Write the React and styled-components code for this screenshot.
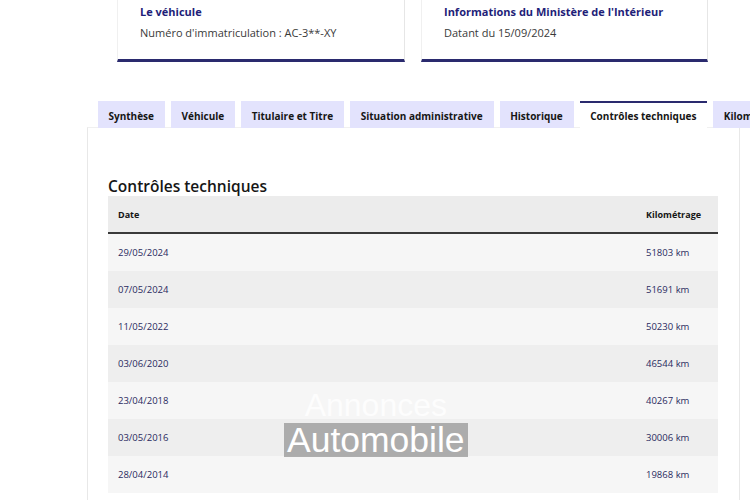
import styled, { createGlobalStyle } from "styled-components"

const GlobalStyle = createGlobalStyle`
    body {
        margin: 0;
        background: #ffffff;
        font-family: "Open Sans", "Liberation Sans", sans-serif;
        color: #161616;
    }
`;

const tabs = [
    "Synthèse",
    "Véhicule",
    "Titulaire et Titre",
    "Situation administrative",
    "Historique",
    "Contrôles techniques",
    "Kilométrage",
];

const controles = [
    { date: "29/05/2024", km: "51803 km" },
    { date: "07/05/2024", km: "51691 km" },
    { date: "11/05/2022", km: "50230 km" },
    { date: "03/06/2020", km: "46544 km" },
    { date: "23/04/2018", km: "40267 km" },
    { date: "03/05/2016", km: "30006 km" },
    { date: "28/04/2014", km: "19868 km" },
];

const App = () => {
    return (
        <StyledPage>
            <GlobalStyle />
            <StyledCards>
                <StyledCard>
                    <StyledCardTitle>Le véhicule</StyledCardTitle>
                    <StyledCardText>Numéro d'immatriculation : AC-3**-XY</StyledCardText>
                </StyledCard>
                <StyledCard>
                    <StyledCardTitle>Informations du Ministère de l'Intérieur</StyledCardTitle>
                    <StyledCardText>Datant du 15/09/2024</StyledCardText>
                </StyledCard>
            </StyledCards>

            <StyledTabsWrap>
                <StyledTabList>
                    {tabs.map((t) => (
                        <StyledTab key={t} $active={t === "Contrôles techniques"}>{t}</StyledTab>
                    ))}
                </StyledTabList>
                <StyledPanel>
                    <StyledHeading>Contrôles techniques</StyledHeading>
                    <StyledTable>
                        <StyledHeadRow>
                            <div>Date</div>
                            <div />
                            <div>Kilométrage</div>
                        </StyledHeadRow>
                        {controles.map((c, i) => (
                            <StyledRow key={c.date} $even={i % 2 === 1}>
                                <div>{c.date}</div>
                                <div />
                                <div>{c.km}</div>
                            </StyledRow>
                        ))}
                        <StyledWatermark>
                            <StyledWatermarkTop>Annonces</StyledWatermarkTop>
                            <StyledWatermarkBottom>Automobile</StyledWatermarkBottom>
                        </StyledWatermark>
                    </StyledTable>
                </StyledPanel>
            </StyledTabsWrap>
        </StyledPage>
    )
}

export default App

const StyledPage = styled.div`
    width: 750px;
    height: 500px;
    overflow: hidden;
`;

const StyledCards = styled.div`
    display: grid;
    grid-template-columns: 288px 287px;
    gap: 16px;
    padding-left: 117px;
`;

const StyledCard = styled.div`
    height: 62px;
    padding: 4px 0 0 22px;
    box-sizing: border-box;
    background: #fff;
    border-left: 1px solid #f0f0f0;
    border-right: 1px solid #e6e6e6;
    border-bottom: 3px solid #2a2a6e;
`;

const StyledCardTitle = styled.div`
    font-size: 11px;
    font-weight: 700;
    color: #1e1e78;
    line-height: 16px;
`;

const StyledCardText = styled.div`
    margin-top: 5px;
    font-size: 11px;
    color: #3a3a3a;
    line-height: 16px;
`;

const StyledTabsWrap = styled.div`
    margin: 39px 0 0 87px;
    width: 700px;
`;

const StyledTabList = styled.div`
    display: flex;
    gap: 6px;
    padding-left: 11px;
    height: 27px;
    align-items: flex-end;
    position: relative;
    z-index: 1;
`;

const StyledTab = styled.div`
    flex: none;
    height: 25px;
    padding: 0 11px 0 10.5px;
    display: flex;
    align-items: center;
    font-size: 10px;
    font-weight: 700;
    white-space: nowrap;
    color: #161616;
    background: ${({ $active }) => ($active ? "#fff" : "#e3e3fd")};
    border-top: 2px solid ${({ $active }) => ($active ? "#2a2a6e" : "transparent")};
    box-sizing: content-box;
`;

const StyledPanel = styled.div`
    width: 653px;
    height: 400px;
    box-sizing: border-box;
    border-left: 1px solid #e8e8e8;
    border-right: 1px solid #e8e8e8;
    border-top: 1px solid #f0f0f0;
    margin-top: -1px;
    padding: 49px 21px 0 20px;
    background: #fff;
`;

const StyledHeading = styled.h2`
    margin: 0;
    font-size: 15.5px;
    font-weight: 600;
    line-height: 19px;
    color: #161616;
`;

const StyledTable = styled.div`
    position: relative;
    margin-top: 0;
`;

const StyledHeadRow = styled.div`
    display: grid;
    grid-template-columns: 1fr 1fr 72px;
    height: 36px;
    align-items: center;
    padding-left: 10px;
    background: #ececec;
    border-bottom: 2px solid #3a3a3a;
    font-size: 9px;
    font-weight: 700;
    color: #161616;
`;

const StyledRow = styled.div`
    display: grid;
    grid-template-columns: 1fr 1fr 72px;
    height: 37px;
    align-items: center;
    padding-left: 10px;
    background: ${({ $even }) => ($even ? "#eeeeee" : "#f6f6f6")};
    font-size: 9.5px;
    color: #2a2a5e;
`;

const StyledWatermark = styled.div`
    position: absolute;
    left: 176px;
    top: 194px;
    display: flex;
    flex-direction: column;
    align-items: center;
    font-family: "Liberation Sans", Arial, sans-serif;
    pointer-events: none;
`;

const StyledWatermarkTop = styled.div`
    font-size: 32px;
    line-height: 30px;
    color: rgba(255, 255, 255, 0.8);
`;

const StyledWatermarkBottom = styled.div`
    margin-top: 3px;
    padding: 0 3px;
    font-size: 35.5px;
    line-height: 34px;
    color: #fff;
    background: rgba(150, 150, 150, 0.75);
`;
